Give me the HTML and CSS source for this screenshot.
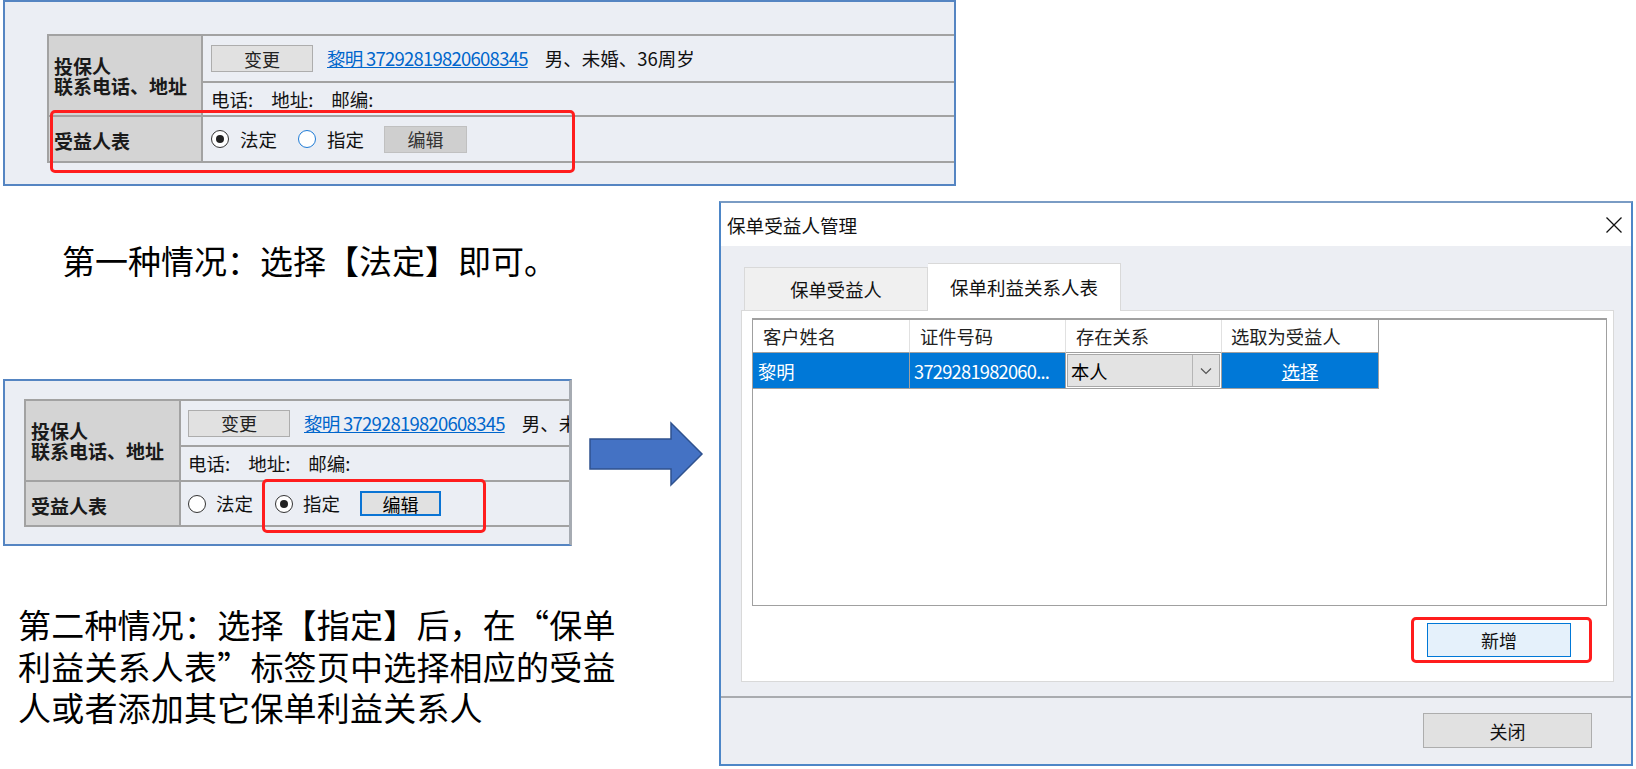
FILE: index.html
```html
<!DOCTYPE html>
<html lang="zh-CN">
<head>
<meta charset="utf-8">
<title>保单受益人</title>
<link rel="stylesheet" href="styles.css">
</head>
<body>
<div class="page">
  <div class="shot shot-1">
    <div class="form form-1">
      <div class="lbl lbl-span">投保人<br>联系电话、地址</div>
      <div class="val"><span class="btn btn-change">变更</span><span class="link">黎明 37292819820608345</span><span class="info">男、未婚、36周岁</span></div>
      <div class="val"><span class="fld">电话:</span><span class="fld">地址:</span><span class="fld">邮编:</span></div>
      <div class="lbl">受益人表</div>
      <div class="val">
        <span class="radio checked"></span><span class="rtext">法定</span>
        <span class="radio hover"></span><span class="rtext">指定</span>
        <span class="btn btn-edit">编辑</span>
      </div>
    </div>
    <div class="hl hl-1"></div>
  </div>

  <div class="lower">
    <div class="left">
      <p class="note note-1">第一种情况：选择【法定】即可。</p>
      <div class="row2">
        <div class="shot shot-2">
          <div class="form form-2">
            <div class="lbl lbl-span">投保人<br>联系电话、地址</div>
            <div class="val"><span class="btn btn-change">变更</span><span class="link">黎明 37292819820608345</span><span class="info">男、未婚、36周岁</span></div>
            <div class="val"><span class="fld">电话:</span><span class="fld">地址:</span><span class="fld">邮编:</span></div>
            <div class="lbl">受益人表</div>
            <div class="val">
              <span class="radio"></span><span class="rtext">法定</span>
              <span class="radio checked"></span><span class="rtext">指定</span>
              <span class="btn btn-edit focus">编辑</span>
            </div>
          </div>
          <div class="hl hl-2"></div>
        </div>
        <svg class="arrow" width="116" height="66" viewBox="0 0 116 66">
          <polygon points="2,18 83,18 83,2 114,33 83,64 83,48 2,48" fill="#4472c4" stroke="#2f528f" stroke-width="1.5"/>
        </svg>
      </div>
      <div class="note note-2">
        <div class="nline">第二种情况：选择【指定】后，在“保单</div>
        <div class="nline">利益关系人表”标签页中选择相应的受益</div>
        <div class="nline">人或者添加其它保单利益关系人</div>
      </div>
    </div>

    <div class="dialog">
      <div class="titlebar">
        <span class="title">保单受益人管理</span>
        <svg class="close" width="16" height="16" viewBox="0 0 16 16">
          <path d="M0.5 0.5 L15.5 15.5 M15.5 0.5 L0.5 15.5" stroke="#111" stroke-width="1.3" fill="none"/>
        </svg>
      </div>
      <div class="client">
        <div class="tabs">
          <div class="tab">保单受益人</div>
          <div class="tab active">保单利益关系人表</div>
        </div>
        <div class="tabpanel">
          <div class="grid">
            <div class="grow ghead">
              <div class="gc c1">客户姓名</div>
              <div class="gc c2">证件号码</div>
              <div class="gc c3">存在关系</div>
              <div class="gc c4">选取为受益人</div>
            </div>
            <div class="grow gdata">
              <div class="gc c1 sel">黎明</div>
              <div class="gc c2 sel num">3729281982060...</div>
              <div class="gc c3 combo-cell">
                <div class="combo"><span class="combo-text">本人</span><span class="combo-btn"><svg width="12" height="8" viewBox="0 0 12 8"><path d="M1 1.5 L6 6.5 L11 1.5" stroke="#555" stroke-width="1.2" fill="none"/></svg></span></div>
              </div>
              <div class="gc c4 sel pick">选择</div>
            </div>
          </div>
          <div class="addrow">
            <span class="btn btn-add">新增</span>
          </div>
          <div class="hl hl-3"></div>
        </div>
      </div>
      <div class="footer">
        <span class="btn btn-close">关闭</span>
      </div>
    </div>
  </div>
</div>
</body>
</html>
```

FILE: styles.css
```css
* { box-sizing: border-box; }
html, body { margin: 0; padding: 0; background: #ffffff; }
body { font-family: "Noto Sans CJK SC", "Noto Sans", sans-serif; color: #000; }

.page {
  width: 1636px;
  height: 769px;
  overflow: hidden;
  position: relative;
  background: #ffffff;
}

/* ---------- screenshot panels ---------- */
.shot {
  position: relative;
  background: #ebeef4;
  border: 2px solid #5585c2;
  overflow: hidden;
}
.shot-1 {
  margin-left: 3px;
  width: 953px;
  height: 186px;
  padding: 32px 0 0 42px;
}
.shot-2 {
  width: 569px;
  height: 167px;
  margin-left: 3px;
  padding: 18px 0 0 19px;
  border-right: 3px solid #a6abb2;
}

.form {
  display: grid;
  gap: 2px;
  background: #a2a2a2;
  border: 2px solid #a2a2a2;
  border-right: none;
  width: 1200px;
  font-size: 18.5px;
  line-height: 1;
}
.form-1 {
  grid-template-columns: 152px 1fr;
  grid-template-rows: 45px 32px 44px;
}
.form-2 {
  grid-template-columns: 153px 1fr;
  grid-template-rows: 44px 33px 43px;
}
.lbl {
  background: #d4d4d4;
  font-weight: bold;
  font-size: 19px;
  line-height: 20px;
  color: #1a1a1a;
  padding-left: 5px;
  display: flex;
  align-items: center;
  padding-top: 4px;
}
.lbl-span { grid-row: span 2; padding-top: 0; }
.val {
  background: #ebeef4;
  display: flex;
  align-items: center;
  padding-left: 8px;
  white-space: nowrap;
}
.form-2 .val { padding-left: 7px; }

.btn {
  display: inline-flex;
  align-items: center;
  justify-content: center;
  background: #e1e1e1;
  border: 1px solid #adadad;
  font-size: 18px;
  color: #222;
  line-height: 1;
}
.btn-change { width: 102px; height: 27px; margin-right: 14px; }
.link {
  color: #0066cc;
  text-decoration: underline;
  letter-spacing: -0.75px;
  margin-right: 17px;
}
.info { color: #111; }
.fld { margin-right: 18px; color: #111; }

.radio {
  width: 18px;
  height: 18px;
  border-radius: 50%;
  border: 1.5px solid #333;
  background: #fff;
  position: relative;
  flex: none;
}
.radio.hover { border-color: #1e7bd6; }
.radio.checked::after {
  content: "";
  position: absolute;
  left: 50%;
  top: 50%;
  width: 8px;
  height: 8px;
  margin: -4px 0 0 -4px;
  border-radius: 50%;
  background: #222;
}
.rtext { margin-left: 11px; margin-right: 20px; color: #111; }
.val .rtext:nth-of-type(2) { margin-right: 21px; }
.btn-edit {
  width: 83px;
  height: 27px;
  background: #cfcfcf;
  border-color: #c0c0c0;
  color: #333;
}
.btn-edit.focus {
  width: 81px;
  height: 25px;
  background: #e1e1e1;
  border: 2px solid #0a74d4;
  color: #000;
}
.form-2 .rtext { margin-left: 10px; margin-right: 20px; }
.form-2 .val .rtext:nth-of-type(2) { margin-right: 22px; }

/* highlight boxes (overlays) */
.hl {
  position: absolute;
  border: 3px solid #ff1d1d;
  border-radius: 5px;
  pointer-events: none;
}
.hl-1 { left: 45px; top: 108px; width: 525px; height: 63px; }
.hl-2 { left: 257px; top: 98px; width: 224px; height: 54px; }
.hl-3 { left: 669px; top: 306px; width: 181px; height: 46px; }

/* ---------- lower area ---------- */
.lower {
  display: flex;
  margin-top: 15px;
}
.left {
  width: 719px;
  flex: none;
}
.note {
  margin: 0;
  font-size: 33px;
  line-height: 40px;
  color: #000;
  white-space: nowrap;
}
.note-1 { padding-left: 62px; margin-top: 39px; }
.row2 {
  display: flex;
  align-items: flex-start;
  margin-top: 99px;
}
.arrow { margin-left: 16px; margin-top: 42px; flex: none; }
.note-2 {
  padding-left: 18px;
  margin-top: 60px;
  display: flex;
  flex-direction: column;
  gap: 0;
  letter-spacing: 0.2px;
}
.nline { height: 41.5px; line-height: 36px; }

/* ---------- dialog ---------- */
.dialog {
  width: 914px;
  height: 565px;
  flex: none;
  border: 2px solid #4d86c7;
  border-top-color: #7a9cc4;
  display: flex;
  flex-direction: column;
  background: #eceef3;
}
.titlebar {
  height: 43px;
  background: #ffffff;
  display: flex;
  align-items: center;
  justify-content: space-between;
  padding: 0 9px 0 6px;
  flex: none;
}
.title { font-size: 18.6px; color: #111; }
.close { flex: none; }

.client {
  padding: 17px 17px 14px 20px;
  border-bottom: 2px solid #a9abaf;
  flex: none;
}
.tabs {
  display: flex;
  align-items: flex-end;
  height: 47px;
  padding-left: 3px;
}
.tab {
  width: 184px;
  height: 43px;
  background: #f0f0f0;
  border: 1px solid #d9d9d9;
  border-bottom: none;
  font-size: 18.3px;
  display: flex;
  align-items: center;
  justify-content: center;
  color: #111;
}
.tab.active {
  width: 193px;
  height: 48px;
  margin-bottom: -1px;
  background: #ffffff;
  position: relative;
  z-index: 1;
  border-left: none;
  font-size: 18.5px;
  padding-bottom: 2px;
}
.tabpanel {
  position: relative;
  background: #ffffff;
  border: 1px solid #d9d9d9;
  height: 372px;
  padding: 7px 6px 0 10px;
}
.grid {
  height: 288px;
  border: 1px solid #a0a0a0;
  border-top: 2px solid #a0a0a0;
  background: #ffffff;
}
.grow { display: flex; }
.ghead { height: 33px; }
.gdata { height: 36px; }
.gc {
  flex: none;
  font-size: 18.3px;
  display: flex;
  align-items: center;
  white-space: nowrap;
  overflow: hidden;
}
.c1 { width: 157px; }
.c2 { width: 156px; }
.c3 { width: 156px; }
.c4 { width: 157px; }
.ghead .gc {
  background: #ffffff;
  color: #222;
  padding-left: 10px;
  border-right: 1px solid #e1e1e1;
  border-bottom: 1px solid #a0a0a0;
  padding-bottom: 1px;
}
.ghead .c4 { border-right: 1px solid #a0a0a0; padding-left: 9px; }
.gdata .gc {
  border-right: 1px solid #a0a0a0;
  border-bottom: 1px solid #a0a0a0;
}
.sel {
  background: #0078d7;
  color: #ffffff;
  padding-left: 5px;
}
.num { letter-spacing: -0.75px; padding-left: 4px; }
.pick { justify-content: center; text-decoration: underline; padding-left: 0; }
.combo-cell { padding: 1px; background: #ffffff; }
.combo {
  width: 100%;
  height: 100%;
  background: #e3e3e3;
  border: 1px solid #a8a8a8;
  display: flex;
  align-items: center;
}
.combo-text { flex: 1; padding-left: 3px; color: #000; }
.combo-btn {
  width: 27px;
  height: 100%;
  border-left: 1px solid #b5b5b5;
  display: flex;
  align-items: center;
  justify-content: center;
}

.addrow {
  display: flex;
  justify-content: flex-end;
  padding: 17px 36px 0 0;
}
.btn-add {
  width: 144px;
  height: 34px;
  background: #e5f1fb;
  border: 1px solid #0078d7;
  color: #111;
}

.footer {
  flex: 1;
  display: flex;
  justify-content: flex-end;
  align-items: flex-start;
  padding: 15px 39px 0 0;
}
.btn-close {
  width: 169px;
  height: 35px;
  color: #111;
}
```
